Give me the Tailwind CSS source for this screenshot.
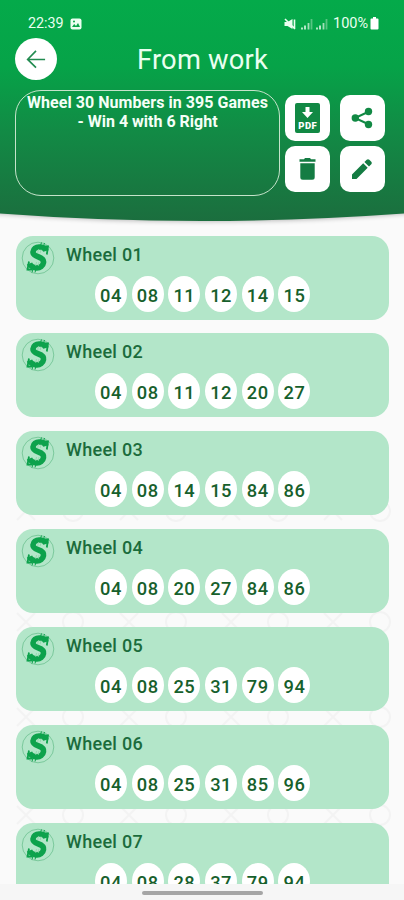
<!DOCTYPE html>
<html lang="en">
<head>
<meta charset="utf-8">
<title>From work</title>
<script src="https://cdn.jsdelivr.net/npm/@tailwindcss/browser@4"></script>
</head>
<body class="bg-[#fafafa]">
<div class="relative isolate flex h-[900px] w-[404px] flex-col overflow-hidden bg-[#fafafa] font-[Roboto,sans-serif]">
  <svg class="absolute left-0 top-0 -z-10" width="404" height="900" viewBox="0 0 404 900">
    <defs>
      <linearGradient id="g" x1="0" y1="0" x2="0" y2="1"><stop offset="0" stop-color="#04aa4a"/><stop offset=".3" stop-color="#06a348"/><stop offset=".6" stop-color="#128a45"/><stop offset="1" stop-color="#1b6e3e"/></linearGradient>
      <filter id="b" x="-10%" y="-10%" width="120%" height="120%"><feGaussianBlur stdDeviation="2.5"/></filter>
    </defs>
    <g id="pattern" fill="none" stroke="#f3f3f3" stroke-width="2"></g>
    <path d="M-10 0H414V213Q202 230 -10 213Z" fill="#000" opacity=".28" filter="url(#b)"/>
    <path d="M0 0H404V213.500Q300 221 202 221Q100 221 0 213.500Z" fill="url(#g)"/>
  </svg>

  <header class="h-[221px] shrink-0 text-[#eafff0]">
    <div class="flex h-[38px] items-center pl-7 pr-[25px] pt-[9px] text-[14px]">
      <span class="w-[36px] text-[14.3px]">22:39</span>
      <svg class="ml-[6px]" width="12" height="12" viewBox="0 0 12 12"><rect x=".5" y=".5" width="11" height="11" rx="2" fill="#eafff0"/><path d="M2 9l2.2-3 1.8 2 2-3L10 9z" fill="#07a548"/><circle cx="4" cy="3.5" r="1" fill="#07a548"/></svg>
      <div class="flex-1"></div>
      <svg width="12" height="12" viewBox="0 0 12 12"><path d="M.5 4h3l5-3v10l-5-3h-3z" fill="#eafff0"/><path d="M1 1l10 10M10.500 1.500v9" stroke="#eafff0" stroke-width="1.600"/></svg>
      <svg class="ml-[5px]" width="12" height="12" viewBox="0 0 12 12" stroke-width="1.8"><path d="M1 11.5v-2M4 11.5v-4" stroke="#c8efd7"/><path d="M7.500 11.500V5" stroke="#a0dfb8"/><path d="M10.500 11.500V1" stroke="#57c482"/></svg>
      <svg class="ml-[3px]" width="12" height="12" viewBox="0 0 12 12" stroke-width="1.8"><path d="M1 11.500v-2M4 11.500v-4" stroke="#c8efd7"/><path d="M7.500 11.500V5" stroke="#a0dfb8"/><path d="M10.500 11.500V1" stroke="#57c482"/></svg>
      <span class="ml-[5px] w-[37px] whitespace-nowrap text-[14.500px]">100%</span>
      <svg width="9" height="13" viewBox="0 0 9 13"><path d="M3 0h3v1.500h1.500q1 0 1 1V11.500q0 1-1 1h-6q-1 0-1-1V2.500q0-1 1-1H3z" fill="#fff"/></svg>
    </div>
    <div class="flex h-[42px] items-center pl-[15px]">
      <div class="flex h-[42px] w-[42px] items-center justify-center rounded-full bg-white">
        <svg width="20" height="20" viewBox="0 0 22 22" fill="none" stroke="#228b50" stroke-width="1.800"><path d="M21 11.500H2M11 2L1.800 11.500L11 20.500"/></svg>
      </div>
      <h1 class="ml-[80px] pt-[4px] text-[27.300px] leading-none tracking-[0.2px]">From work</h1>
    </div>
    <div class="mt-[10px] flex pl-[15px]">
      <div class="h-[106px] w-[265px] rounded-[26px] border-[1.5px] border-[#c5e3ca] pt-[3px] text-center text-[16px] font-bold leading-[18.500px] text-[#f5fff7]"><span class="whitespace-nowrap tracking-[0.05px]">Wheel 30 Numbers in 395 Games</span><br>- Win 4 with 6 Right</div>
      <div class="ml-[5px] mt-[5px] grid h-[97px] grid-cols-[45px_45.500px] grid-rows-[46px_46px] gap-x-[9.500px] gap-y-[5px]">
        <div class="flex items-center justify-center rounded-[10px] bg-white">
          <svg width="25" height="30" viewBox="0 0 25 30"><rect x="0" y="0" width="25" height="30" rx="2" fill="#118944"/><path d="M10.500 4h4v5h3.500l-5.500 6L7 9h3.500z" fill="#fff"/><text x="12.500" y="25.500" text-anchor="middle" textLength="18.500" font-family="Roboto" font-size="9.500" font-weight="900" fill="#fff">PDF</text></svg>
        </div>
        <div class="flex items-center justify-center rounded-[10px] bg-white">
          <svg width="22" height="22" viewBox="0 0 22 22" fill="#118944"><path d="M18 4.500L4 11l14 6.500" fill="none" stroke="#118944" stroke-width="2"/><circle cx="17.500" cy="4.500" r="3.700"/><circle cx="4.300" cy="11" r="3.700"/><circle cx="17.500" cy="17.500" r="3.700"/></svg>
        </div>
        <div class="flex items-center justify-center rounded-[10px] bg-white">
          <svg width="17" height="22" viewBox="0 0 17 22" fill="#147c43"><path d="M.5 1.200H5L6 0h5l1 1.200h4.500v2.600H.5zM1.300 5.200h14.400v14q0 2.500-2.500 2.500H3.800q-2.500 0-2.500-2.500z"/></svg>
        </div>
        <div class="flex items-center justify-center rounded-[10px] bg-white">
          <svg width="22" height="22" viewBox="0 0 22 22" fill="#147c43"><path d="M1 16.500L12.200 5.300l4.500 4.500L5.500 21H1zM13.400 4.100l2.300-2.300q1.300-1.200 2.600 0l2 2q1.200 1.300 0 2.500l-2.300 2.300z"/></svg>
        </div>
      </div>
    </div>
  </header>

  <main id="list" class="flex h-[663px] shrink-0 flex-col gap-[13.900px] overflow-hidden pl-4 pt-[14.500px]"></main>

  <footer class="flex h-4 shrink-0 justify-center bg-[#f6f6f6] pt-[7px]">
    <div class="h-[4px] w-[121px] rounded-full bg-[#a6a6a6]"></div>
  </footer>
</div>
<script>
const wheels = [
  ['04','08','11','12','14','15'],
  ['04','08','11','12','20','27'],
  ['04','08','14','15','84','86'],
  ['04','08','20','27','84','86'],
  ['04','08','25','31','79','94'],
  ['04','08','25','31','85','96'],
  ['04','08','28','37','79','94']
];
const coin = `<svg width="34" height="34" viewBox="0 0 34 34"><circle cx="17" cy="17" r="15.800" fill="none" stroke="#7bc99c" stroke-width="1"/><g fill="none" stroke="#0da24c"><path d="M25 10C23.500 4.500 12.500 4.500 12 11C11.500 17 23.500 14.500 22.500 21.500C21.500 28.500 10.500 28.500 8.500 22.500" stroke-width="5.600"/><path d="M23 5.500h4l-1.200 8M11 28.500H6.500l1.500-8" stroke-width="1.800"/><path d="M19.500 4.500l1-3M22.500 5l1-3M12 28l-1 3.500M15 28l-1 3.500" stroke-width="1"/><path d="M17.500 8l-.8 4M20 8.500l-.8 3.500M15.500 21l-.8 4M18 21l-.8 4" stroke="#8fd3a8" stroke-width=".8"/></g></svg>`;
document.getElementById('list').innerHTML = wheels.map((nums, i) => `
  <section class="flex h-[84px] w-[373px] shrink-0 flex-col rounded-[17px] bg-[#b3e6c9] text-[#1b6c3c]">
    <div class="flex h-[40px] items-start pl-[5px] pt-[5px]">${coin}<h2 class="ml-[11px] mt-[2px] text-[18px] font-medium leading-[24px] tracking-[0.3px]">Wheel 0${i + 1}</h2></div>
    <div class="flex gap-[4.700px] pl-[79px]">${nums.map(n => `<span class="flex h-[36px] w-[32px] shrink-0 items-center justify-center rounded-[50%] bg-white pt-[3px] text-[18.300px] font-medium leading-[27px] tracking-[0.500px] text-[#17602c]">${n}</span>`).join('')}</div>
  </section>`).join('');
let marks = '';
for (const y of [511, 622, 717, 815]) {
  for (const x of [25, 128, 230, 332]) {
    marks += `<path d="M${x - 8} ${y - 9}l18 18m0-18l-18 18"/><circle cx="${x + 48}" cy="${y}" r="10"/>`;
  }
}
document.getElementById('pattern').innerHTML = marks;
</script>
</body>
</html>
